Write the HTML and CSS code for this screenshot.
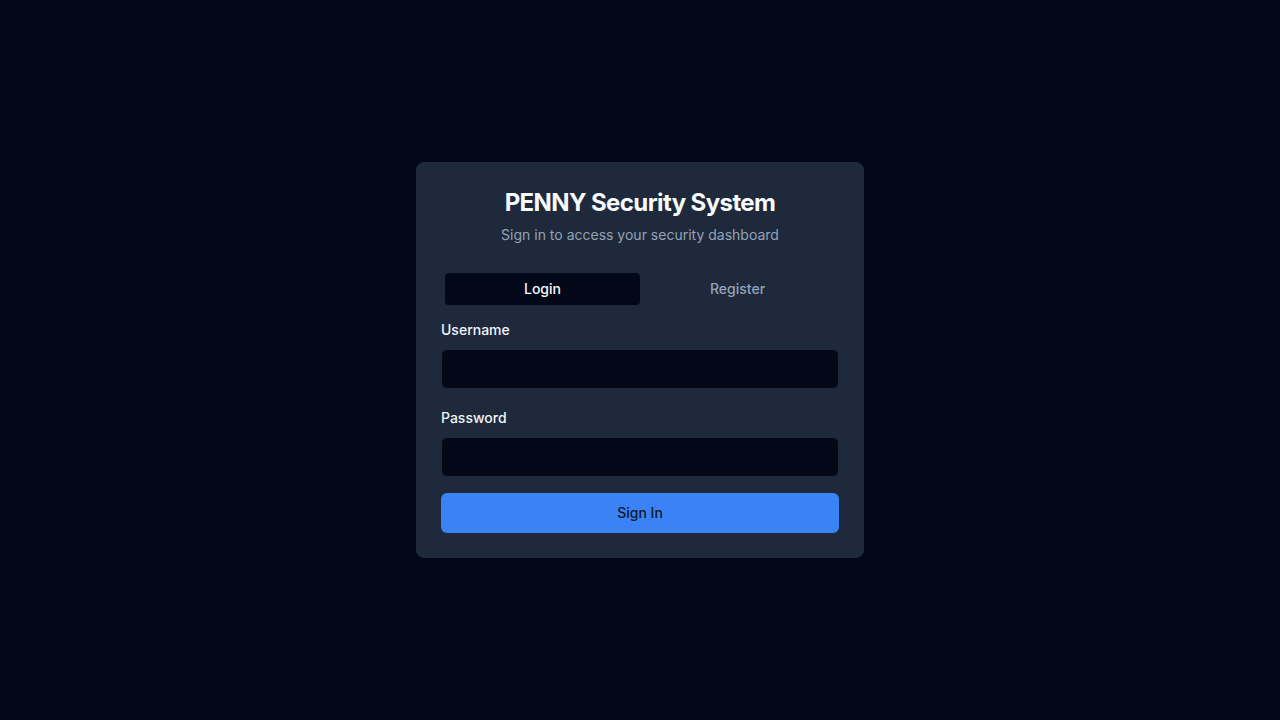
FILE: index.html
```html
<!DOCTYPE html>
<html lang="en">
<head>
<meta charset="utf-8">
<title>PENNY Security System</title>
<link rel="stylesheet" href="styles.css">
</head>
<body>
<main class="page">
  <section class="card">
    <header class="card-header">
      <h1 class="title">PENNY Security System</h1>
      <p class="subtitle">Sign in to access your security dashboard</p>
    </header>
    <div class="card-content">
      <div class="tabs">
        <button class="tab tab-active" type="button">Login</button>
        <button class="tab" type="button">Register</button>
      </div>
      <form class="form">
        <div class="field">
          <label class="label" for="username">Username</label>
          <input class="input" id="username" type="text">
        </div>
        <div class="field">
          <label class="label" for="password">Password</label>
          <input class="input" id="password" type="password">
        </div>
        <button class="submit" type="button">Sign In</button>
      </form>
    </div>
  </section>
</main>
</body>
</html>
```

FILE: styles.css
```css
* { box-sizing: border-box; }

html, body {
  margin: 0;
  padding: 0;
}

body {
  background: #020817;
  color: #f8fafc;
  font-family: Inter, "Noto Sans", "Liberation Sans", sans-serif;
  font-size: 14px;
}

.page {
  min-height: 100vh;
  display: flex;
  align-items: center;
  justify-content: center;
}

.card {
  width: 448px;
  background: #1e293b;
  border: 1px solid #1e293b;
  border-radius: 8px;
}

.card-header {
  padding: 24px;
  display: flex;
  flex-direction: column;
  align-items: center;
  gap: 6px;
}

.title {
  margin: 0;
  font-size: 24px;
  line-height: 32px;
  font-weight: 700;
  letter-spacing: -0.6px;
  color: #f8fafc;
}

.subtitle {
  margin: 0;
  font-size: 14px;
  line-height: 20px;
  color: #94a3b8;
}

.card-content {
  padding: 0 24px 24px;
}

.tabs {
  display: grid;
  grid-template-columns: 1fr 1fr;
  padding: 4px;
  height: 40px;
  border-radius: 6px;
  background: #1e293b;
}

.tab {
  border: 0;
  background: transparent;
  font-family: inherit;
  font-size: 14px;
  font-weight: 500;
  line-height: 20px;
  color: #94a3b8;
  border-radius: 4px;
  padding: 0;
}

.tab-active {
  background: #020817;
  color: #f8fafc;
}

.form {
  margin-top: 11px;
  display: flex;
  flex-direction: column;
}

.field {
  display: flex;
  flex-direction: column;
  margin-bottom: 19px;
}

.field + .field {
  margin-bottom: 16px;
}

.label {
  font-size: 14px;
  font-weight: 500;
  line-height: 20px;
  color: #f1f5f9;
  margin-bottom: 9px;
}

.input {
  height: 40px;
  width: 100%;
  background: #020817;
  border: 1px solid #1e293b;
  border-radius: 6px;
  color: #f8fafc;
  font-family: inherit;
  font-size: 14px;
  padding: 8px 12px;
  outline: none;
}

.submit {
  height: 40px;
  width: 100%;
  border: 0;
  border-radius: 6px;
  background: #3b82f6;
  color: #0f172a;
  font-family: inherit;
  font-size: 14px;
  font-weight: 500;
  line-height: 20px;
  padding: 10px 16px;
}
```
